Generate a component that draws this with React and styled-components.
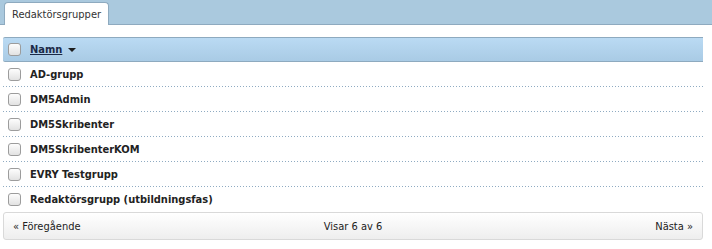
import React from "react";
import styled, { createGlobalStyle } from "styled-components";

const GlobalStyle = createGlobalStyle`
  body {
    margin: 0;
    background: #fff;
    font-family: "DejaVu Sans Condensed", "DejaVu Sans", Verdana, sans-serif;
    font-size: 11px;
    color: #222;
  }
`;

const TabBar = styled.div`
  display: flex;
  align-items: flex-end;
  height: 24px;
  padding-left: 4px;
  background: #aac9de;
  border-bottom: 1px solid #8eaabf;
`;

const Tab = styled.div`
  display: flex;
  align-items: center;
  height: 22px;
  margin-bottom: -1px;
  padding: 0 7px;
  background: #fff;
  border: 1px solid #8eaabf;
  border-bottom: none;
  border-radius: 4px 4px 0 0;
  font-size: 11px;
  color: #333;
`;

const Panel = styled.div`
  margin: 12px 9px 0 3px;
`;

const HeaderRow = styled.div`
  display: flex;
  align-items: center;
  height: 23px;
  padding-left: 5px;
  background: linear-gradient(#badaf3, #a9cbe5);
  border-top: 1px solid #8eaabf;
  border-bottom: 1px solid #8eaabf;
  border-radius: 2px 0 0 2px;
`;

const Row = styled.div`
  display: flex;
  align-items: center;
  height: 25px;
  padding-left: 5px;
  box-sizing: border-box;
  font-weight: bold;
  color: #222;
  background: ${(p) =>
    p.$last
      ? "none"
      : "linear-gradient(to right, #8fabc2 1px, transparent 1px) repeat-x left bottom / 3px 1px"};
`;

const Check = styled.span`
  display: inline-block;
  width: 11px;
  height: 11px;
  margin-right: 9px;
  border: 1px solid #9c9c9c;
  border-radius: 3px;
  background: linear-gradient(#fdfdfd, #e2e2e2);
  flex-shrink: 0;
`;

const SortLink = styled.a`
  display: inline-flex;
  align-items: center;
  gap: 6px;
  font-weight: bold;
  color: #1b2a47;
  text-decoration: none;
  cursor: pointer;

  span {
    text-decoration: underline;
  }
`;

const Caret = styled.i`
  width: 0;
  height: 0;
  border-left: 4px solid transparent;
  border-right: 4px solid transparent;
  border-top: 4px solid #1d1d1d;
`;

const Footer = styled.div`
  display: grid;
  grid-template-columns: 1fr auto 1fr;
  align-items: center;
  height: 26px;
  padding: 0 9px;
  border: 1px solid #d9d9d9;
  border-radius: 3px;
  background: linear-gradient(#ffffff, #eeeeee);
  color: #222;
  font-size: 11px;
`;

const PagerLink = styled.a`
  justify-self: ${(p) => (p.$right ? "end" : "start")};
  color: #222;
  text-decoration: none;
  cursor: pointer;
`;

const groups = [
  "AD-grupp",
  "DM5Admin",
  "DM5Skribenter",
  "DM5SkribenterKOM",
  "EVRY Testgrupp",
  "Redaktörsgrupp (utbildningsfas)",
];

export default function App() {
  return (
    <>
      <GlobalStyle />
      <TabBar>
        <Tab>Redaktörsgrupper</Tab>
      </TabBar>
      <Panel>
        <HeaderRow>
          <Check />
          <SortLink>
            <span>Namn</span>
            <Caret />
          </SortLink>
        </HeaderRow>
        {groups.map((name, i) => (
          <Row key={name} $last={i === groups.length - 1}>
            <Check />
            {name}
          </Row>
        ))}
        <Footer>
          <PagerLink>« Föregående</PagerLink>
          <span>Visar 6 av 6</span>
          <PagerLink $right>Nästa »</PagerLink>
        </Footer>
      </Panel>
    </>
  );
}
